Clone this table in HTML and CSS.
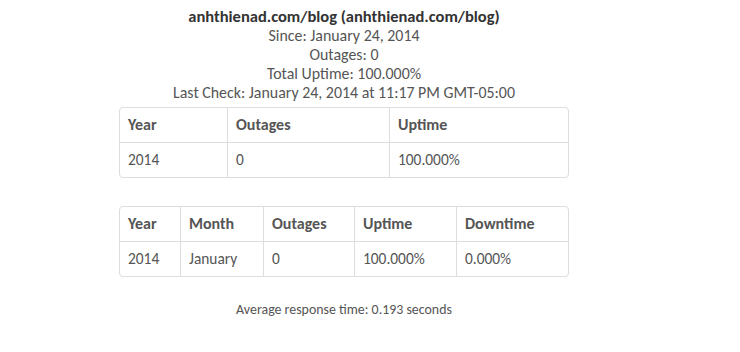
FILE: index.html
```html
<!DOCTYPE html>
<html>
<head>
<meta charset="utf-8">
<link rel="stylesheet" href="styles.css">
</head>
<body>
<div class="page">
  <div class="summary">
    <div class="title">anhthienad.com/blog (anhthienad.com/blog)</div>
    <div>Since: January 24, 2014</div>
    <div>Outages: 0</div>
    <div>Total Uptime: 100.000%</div>
    <div>Last Check: January 24, 2014 at 11:17 PM GMT-05:00</div>
  </div>
  <div class="table-wrap t1">
    <table>
      <tr><th class="c1">Year</th><th class="c2">Outages</th><th>Uptime</th></tr>
      <tr><td>2014</td><td>0</td><td>100.000%</td></tr>
    </table>
  </div>
  <div class="table-wrap t2">
    <table>
      <tr><th class="d1">Year</th><th class="d2">Month</th><th class="d3">Outages</th><th class="d4">Uptime</th><th>Downtime</th></tr>
      <tr><td>2014</td><td>January</td><td>0</td><td>100.000%</td><td>0.000%</td></tr>
    </table>
  </div>
  <div class="avg">Average response time: 0.193 seconds</div>
</div>
</body>
</html>
```
FILE: styles.css
```css
html, body { margin: 0; padding: 0; background: #fff; }
body {
  font-family: "Carlito", "Lato", "Open Sans", sans-serif;
  color: #555;
  font-size: 14px;
}
.page { width: 688px; padding-top: 7px; }
.summary { text-align: center; line-height: 19px; font-size: 15.9px; }
.title { font-weight: bold; color: #333; font-size: 16.5px; }
.table-wrap {
  width: 448px;
  margin: 0 auto;
  border: 1px solid #ddd;
  border-radius: 4px;
  overflow: hidden;
}
.t1 { margin-top: 5px; }
.t2 { margin-top: 28px; }
table { width: 100%; border-collapse: collapse; }
th, td {
  text-align: left;
  padding: 8px 8px;
  line-height: 18px;
  height: 18px;
  font-size: 15.4px;
  border-left: 1px solid #ddd;
}
th:first-child, td:first-child { border-left: none; }
th { font-weight: bold; color: #555; font-size: 16px; }
td { border-top: 1px solid #ddd; }
.c1 { width: 91px; }
.c2 { width: 145px; }
.d1 { width: 44px; }
.d2 { width: 66px; }
.d3 { width: 74px; }
.d4 { width: 85px; }
.avg { text-align: center; font-size: 13.9px; margin-top: 24px; }
```
